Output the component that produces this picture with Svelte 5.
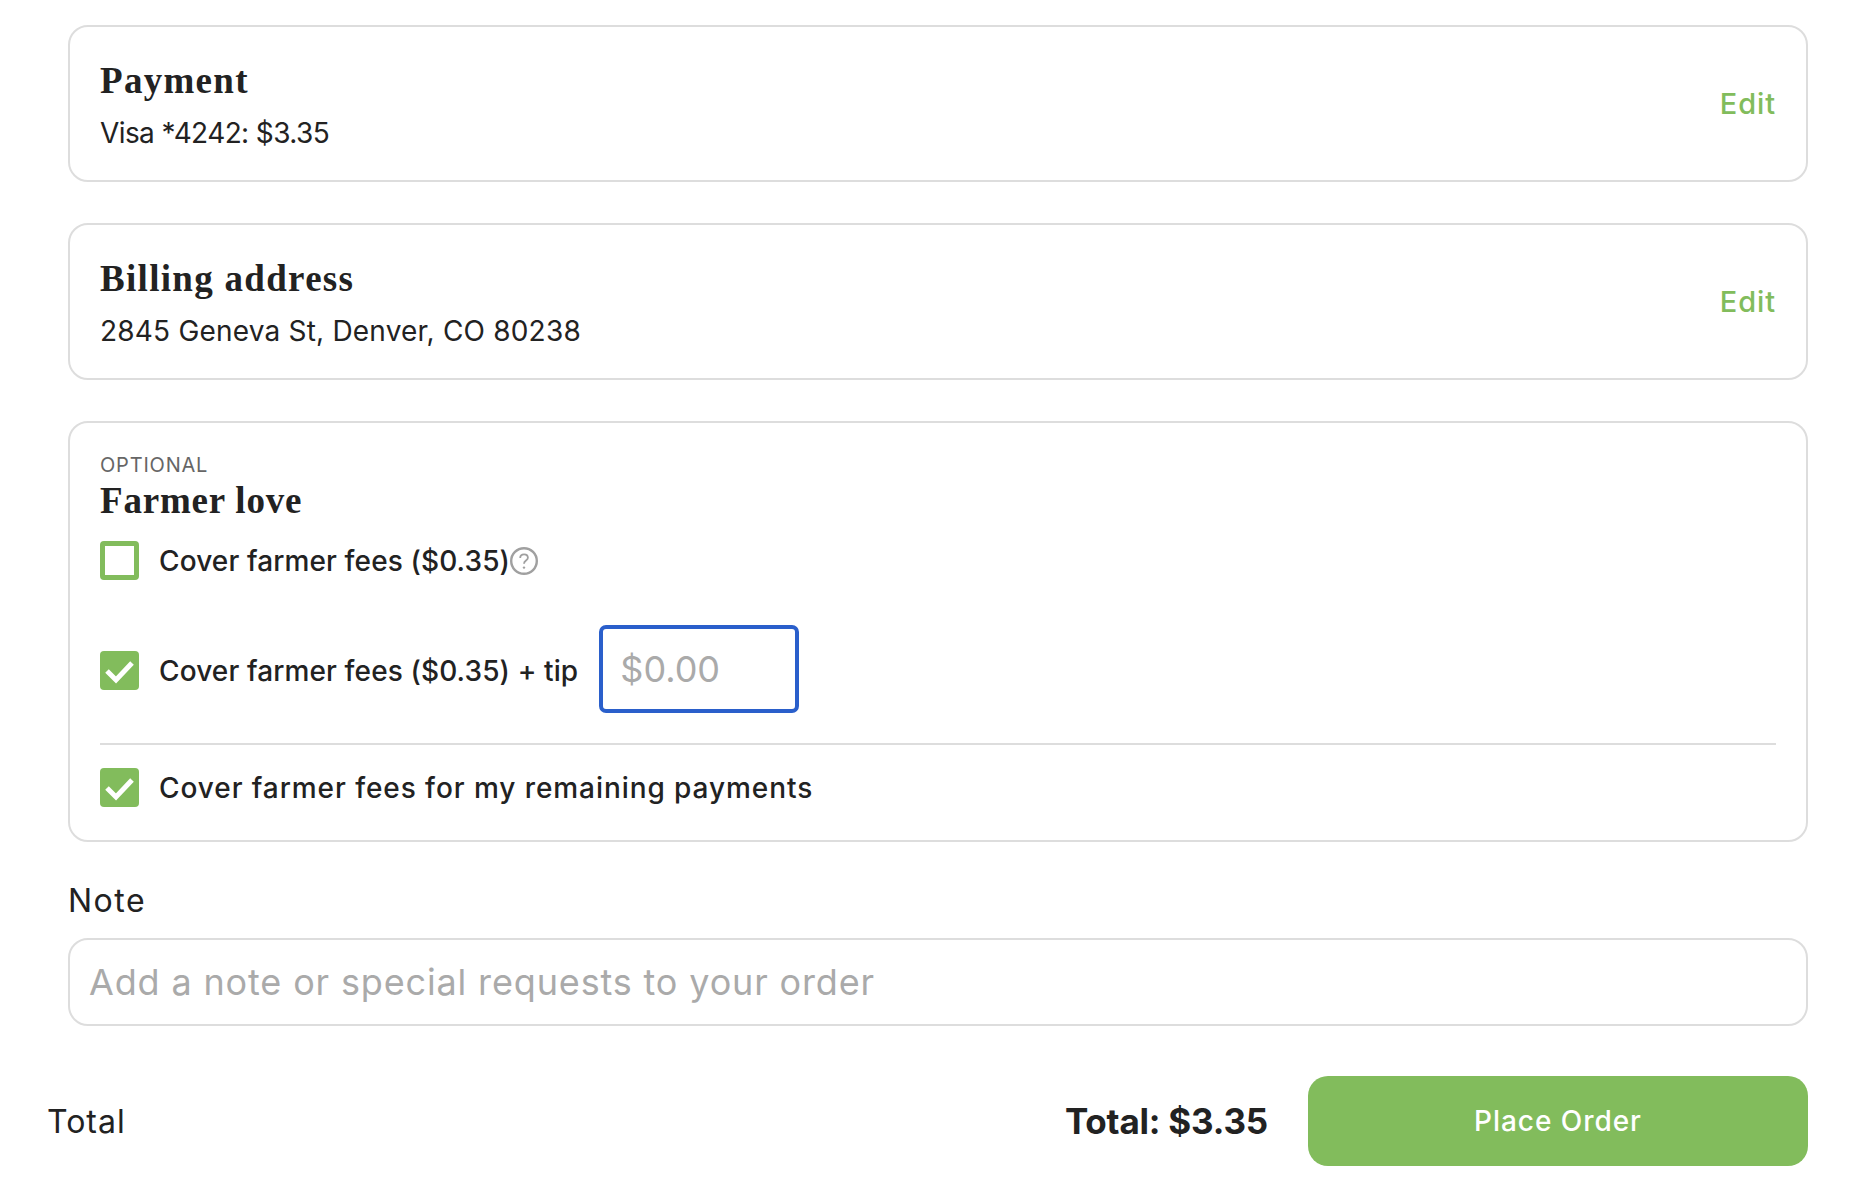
<script>
  let coverFees = $state(false);
  let coverTip = $state(true);
  let coverRemaining = $state(true);
</script>

<div class="page">
  <section class="card summary">
    <div>
      <h2>Payment</h2>
      <p class="visa">Visa *4242: $3.35</p>
    </div>
    <button class="edit">Edit</button>
  </section>

  <section class="card summary">
    <div>
      <h2>Billing address</h2>
      <p class="address">2845 Geneva St, Denver, CO 80238</p>
    </div>
    <button class="edit">Edit</button>
  </section>

  <section class="card love">
    <div class="eyebrow">OPTIONAL</div>
    <h2>Farmer love</h2>

    <label class="row">
      <input type="checkbox" bind:checked={coverFees} />
      <span class="box">
        {#if coverFees}
          <svg viewBox="0 0 39 39"><path d="M7 20l9 9 16-17" /></svg>
        {/if}
      </span>
      <span class="text">Cover farmer fees ($0.35)</span>
      <svg class="help" viewBox="0 0 28 28" aria-hidden="true">
        <circle cx="14" cy="14" r="12.8" />
        <path d="M10.2 11c0-2.2 1.7-3.7 3.9-3.7s3.8 1.4 3.8 3.4c0 2.9-3.9 2.9-3.9 6" />
        <circle class="dot" cx="14" cy="20.6" r="1.2" />
      </svg>
    </label>

    <div class="row tip-row">
      <label class="tip-label">
        <input type="checkbox" bind:checked={coverTip} />
        <span class="box">
          {#if coverTip}
            <svg viewBox="0 0 39 39"><path d="M7 20l9 9 16-17" /></svg>
          {/if}
        </span>
        <span class="text">Cover farmer fees ($0.35) + tip</span>
      </label>
      <input class="tip" type="text" placeholder="$0.00" />
    </div>

    <hr />

    <label class="row">
      <input type="checkbox" bind:checked={coverRemaining} />
      <span class="box">
        {#if coverRemaining}
          <svg viewBox="0 0 39 39"><path d="M7 20l9 9 16-17" /></svg>
        {/if}
      </span>
      <span class="text remaining">Cover farmer fees for my remaining payments</span>
    </label>
  </section>

  <label class="note">
    <span>Note</span>
    <input type="text" placeholder="Add a note or special requests to your order" />
  </label>

  <footer>
    <span class="total-label">Total</span>
    <div class="actions">
      <strong>Total: $3.35</strong>
      <button class="place">Place Order</button>
    </div>
  </footer>
</div>

<style>
  :global(body) {
    background: #fff;
  }

  .page {
    box-sizing: border-box;
    width: 1860px;
    height: 1196px;
    padding: 25px 52px 0 68px;
    color: #222;
    font-family: Inter, "Liberation Sans", sans-serif;
    font-size: 28px;
  }

  .card {
    box-sizing: border-box;
    border: 2px solid #ddd;
    border-radius: 20px;
    margin-bottom: 41px;
  }

  .summary {
    display: flex;
    align-items: center;
    justify-content: space-between;
    height: 157px;
    padding: 0 30px 0 30px;
  }

  h2 {
    margin: 0;
    padding-top: 5px;
    font-family: "Liberation Serif", serif;
    font-size: 37px;
    font-weight: 700;
    line-height: 44px;
    letter-spacing: 1.3px;
    color: #222;
  }

  p {
    margin: 10px 0 0;
    line-height: 40px;
  }

  .visa {
    letter-spacing: -0.6px;
  }

  .address {
    letter-spacing: 0.2px;
  }

  .edit {
    padding: 0;
    border: 0;
    background: none;
    color: #82bc5c;
    font: inherit;
    font-size: 29px;
    font-weight: 500;
    letter-spacing: 0.9px;
  }

  .love {
    height: 421px;
    padding: 30px 30px 0;
  }

  .eyebrow {
    font-size: 20px;
    line-height: 24px;
    color: #666;
    letter-spacing: 0.8px;
  }

  .love h2 {
    padding-top: 3px;
    line-height: 42px;
    margin-bottom: 19px;
    letter-spacing: 0.8px;
  }

  .row,
  .tip-label {
    display: flex;
    align-items: center;
  }

  .row input[type="checkbox"],
  .tip-label input[type="checkbox"] {
    position: absolute;
    opacity: 0;
    width: 0;
    height: 0;
  }

  .box {
    box-sizing: border-box;
    flex: none;
    width: 39px;
    height: 39px;
    margin-right: 20px;
    border: 5px solid #82bc5c;
    border-radius: 4px;
  }

  input:checked + .box {
    border: 0;
    background: #82bc5c;
  }

  .box svg {
    display: block;
    width: 39px;
    height: 39px;
    fill: none;
    stroke: #fff;
    stroke-width: 5;
  }

  .text {
    font-weight: 500;
    letter-spacing: 0.12px;
  }

  .remaining {
    letter-spacing: 0.93px;
  }

  .help {
    width: 28px;
    height: 28px;
    fill: none;
    stroke: #a0a0a0;
    stroke-width: 2.4;
  }

  .help path {
    stroke-width: 1.8;
  }

  .help .dot {
    fill: #a0a0a0;
    stroke: none;
  }

  .tip-row {
    margin-top: 45px;
  }

  /* the label sits a little under the field's centre */
  .tip-label {
    padding-top: 3px;
  }

  .tip {
    box-sizing: border-box;
    width: 200px;
    height: 88px;
    margin-left: 21px;
    padding: 0 17px;
    border: 4px solid #2a5fcb;
    border-radius: 7px;
    outline: none;
    font-family: inherit;
    font-size: 36px;
    color: #222;
  }

  ::placeholder {
    color: #aaa;
    opacity: 1;
  }

  hr {
    height: 2px;
    margin: 30px 0 23px;
    border: 0;
    background: #ddd;
  }

  .note {
    display: block;
  }

  .note span {
    display: block;
    font-size: 32px;
    line-height: 40px;
    letter-spacing: 1.5px;
    margin-top: -2px;
    margin-bottom: 17px;
  }

  .note input {
    box-sizing: border-box;
    display: block;
    width: 100%;
    height: 88px;
    padding: 0 19px;
    border: 2px solid #ddd;
    border-radius: 20px;
    outline: none;
    font-family: inherit;
    font-size: 36px;
    letter-spacing: 0.85px;
  }

  footer {
    display: flex;
    align-items: center;
    justify-content: space-between;
    margin: 50px 0 0 -21px;
  }

  .total-label {
    font-size: 32px;
    letter-spacing: 1px;
  }

  .actions {
    display: flex;
    align-items: center;
    gap: 40px;
  }

  strong {
    font-size: 35px;
    font-weight: 700;
    letter-spacing: -0.2px;
  }

  .place {
    width: 500px;
    height: 90px;
    border: 0;
    border-radius: 20px;
    background: #82bc5c;
    color: #fff;
    font: inherit;
    font-weight: 500;
    letter-spacing: 0.95px;
  }
</style>
